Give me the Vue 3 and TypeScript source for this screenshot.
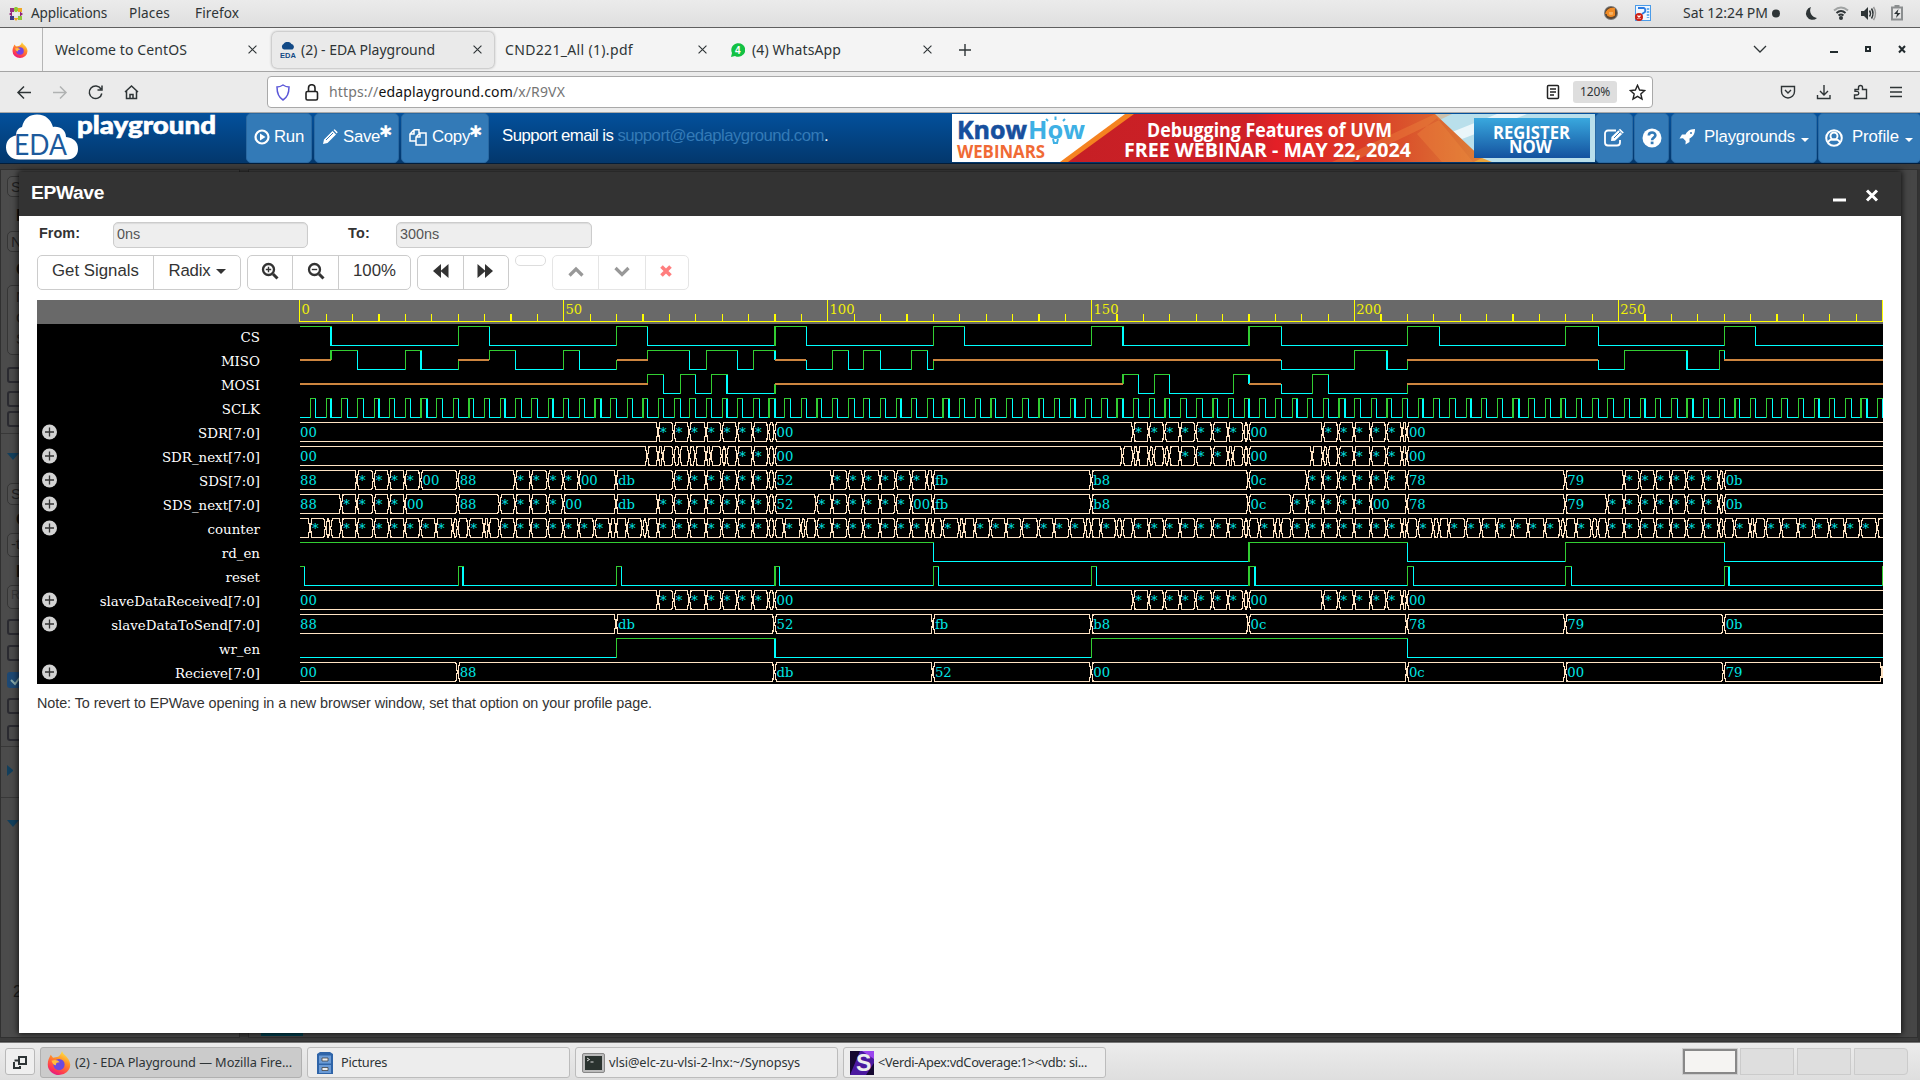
<script setup lang="ts">
type Level = 'h' | 'l' | 'z'
interface Signal {
  name: string
  kind: 'bit' | 'bus'
  wave?: [number, Level][]
  bus?: [number, string][]
}

// Stretches a label to its design width through letter spacing.
const vFit = {
  mounted(el: HTMLElement, binding: { value: number }) {
    el.style.letterSpacing = '0px'
    const natural = el.getBoundingClientRect().width
    const count = (el.textContent ?? '').trim().length
    el.style.letterSpacing = `${(binding.value - natural) / count}px`
  },
}

// Times snap to whole canvas units before the 120% page zoom is applied.
const END = 300
const X0 = 262.8
const UNITS = 1319
const ZOOM = 1.2
const px = (t: number) => +(X0 + ZOOM * Math.round((t * UNITS) / END)).toFixed(2)

const parseBits = (s: string): [number, Level][] =>
  s.split(' ').map((p) => [Number(p.slice(1)), p[0] as Level])
const parseBus = (s: string): [number, string][] =>
  s.split(' ').map((p) => {
    const [t, v] = p.split('=')
    return [Number(t), v ?? '']
  })

const frames = Array.from({ length: 10 }, (_, i) => i * 30)
const cs = frames.map((t) => `h${t} l${t + 6}`).join(' ')
const reset = frames.map((t) => `h${t} l${t + 1}`).join(' ') + ' h300'
const sclk = 'l0 ' + Array.from({ length: 100 }, (_, i) => `h${3 * i + 2} l${3 * i + 3}`).join(' ')
const counter = frames
  .map((t) =>
    [[0, ''], [2, '*'], [5, ''], [6, ''], [8, '*'], [11, '*'], [14, '*'], [17, '*'], [20, '*'], [23, '*'], [26, '*'], [29, '']]
      .map(([d, v]) => `${t + Number(d)}=${v}`)
      .join(' '),
  )
  .join(' ')
const sdr =
  '0=00 68=* 71=* 74=* 77=* 80=* 83=* 86=* 89 90=00 158=* 161=* 164=* 167=* 170=* 173=* 176=* 179 180=00 194=* 197=* 200=* 203=* 206=* 209 210=00'

const bit = (name: string, s: string): Signal => ({ name, kind: 'bit', wave: parseBits(s) })
const bus = (name: string, s: string): Signal => ({ name, kind: 'bus', bus: parseBus(s) })

const signals: Signal[] = [
  bit('CS', cs),
  bit('MISO', 'z0 h6 l11 h20 l23 z30 h36 l41 h50 l53 z60 h66 l74 h77 l83 h86 z90 l96 h101 l104 h107 l110 h116 l119 z120 l186 h200 l206 z210 l246 h251 l263 h269 z270'),
  bit('MOSI', 'z0 h66 l69 h72 l75 h78 l81 z90 h156 l159 h162 l165 h177 z180 l186 h192 l195 z210'),
  bit('SCLK', sclk),
  bus('SDR[7:0]', sdr),
  bus('SDR_next[7:0]', '0=00 66 68 69 71 72 74 75 77 78 80 81 83=* 86=* 89 90=00 156 158 159 161 162 164 165 167=* 170=* 173=* 176 177 179 180=00 192 194 195 197=* 200=* 203=* 206=* 209 210=00'),
  bus('SDS[7:0]', '0=88 11=* 14=* 17=* 20=* 23=00 30=88 41=* 44=* 47=* 50=* 53=00 60=db 71=* 74=* 77=* 80=* 83=* 86=* 89 90=52 101=* 104=* 107=* 110=* 113=* 116=* 119 120=fb 150=b8 180=0c 191=* 194=* 197=* 200=* 203=* 206=* 210=78 240=79 251=* 254=* 257=* 260=* 263=* 266=* 269 270=0b'),
  bus('SDS_next[7:0]', '0=88 8=* 11=* 14=* 17=* 20=00 30=88 38=* 41=* 44=* 47=* 50=00 60=db 68=* 71=* 74=* 77=* 80=* 83=* 86=* 89 90=52 98=* 101=* 104=* 107=* 110=* 113=* 116=00 120=fb 150=b8 180=0c 188=* 191=* 194=* 197=* 200=* 203=00 210=78 240=79 248=* 251=* 254=* 257=* 260=* 263=* 266=* 269 270=0b'),
  bus('counter', counter),
  bit('rd_en', 'h0 l120 h180 l210 h240 l270'),
  bit('reset', reset),
  bus('slaveDataReceived[7:0]', sdr),
  bus('slaveDataToSend[7:0]', '0=88 60=db 90=52 120=fb 150=b8 180=0c 210=78 240=79 270=0b'),
  bit('wr_en', 'l0 h60 l90 h150 l210'),
  bus('Recieve[7:0]', '0=00 30=88 90=db 120=52 150=00 210=0c 240=00 270=79 300'),
]

const rowTop = (i: number) => 24 + i * 24
const order: Record<Level, number> = { l: 0, z: 1, h: 2 }

function bitPaths(s: Signal, i: number) {
  const top = rowTop(i)
  const y: Record<Level, number> = { h: top + 2.5, z: top + 12, l: top + 21.5 }
  let high = ''
  let low = ''
  let mid = ''
  const w = s.wave ?? []
  w.forEach(([t, lv], k) => {
    const end = k + 1 < w.length ? w[k + 1][0] : END
    const x = px(t)
    const seg = `M${k ? x - 0.6 : x} ${y[lv]}H${px(end) + (end < END ? 0.6 : 0)}`
    if (lv === 'h') high += seg
    else if (lv === 'l') low += seg
    else mid += `M${x} ${y.z}H${px(end)}`
    if (k) {
      const prev = w[k - 1][1]
      const edge = `M${x} ${y[prev]}V${y[lv]}`
      if (order[lv] > order[prev]) high += edge
      else low += edge
    }
  })
  return { high, low, mid }
}

function busPath(s: Signal, i: number) {
  const t0 = rowTop(i) + 2.5
  const b0 = t0 + 19
  const m = t0 + 9.5
  const list = s.bus ?? []
  return list
    .map(([t], k) => {
      const last = k + 1 >= list.length
      const end = last ? END : list[k + 1][0]
      const a = px(t)
      const b = px(end)
      if (t >= END) return `M${a - 0.6} ${m - 6}V${m + 6}`
      let d = k
        ? `M${a + 1.3} ${t0}L${a - 0.2} ${m}L${a + 1.3} ${b0}`
        : ''
      const l = k ? a + 0.7 : a
      const r = last ? b : b - 1.9
      d += `M${l} ${t0}H${r}M${l} ${b0}H${r}`
      if (!last) d += `M${b - 2.4} ${t0}L${b - 0.9} ${m}L${b - 2.4} ${b0}`
      return d
    })
    .join('')
}

const rows = signals.map((s, i) => ({
  ...s,
  top: rowTop(i),
  bits: s.kind === 'bit' ? bitPaths(s, i) : null,
  path: s.kind === 'bus' ? busPath(s, i) : '',
  texts: (s.bus ?? []).filter(([, v]) => v).map(([t, v]) => ({ x: px(t) + (t ? 1.5 : 0.2), v })),
}))

const ticks = Array.from({ length: 61 }, (_, i) => i * 5)
const majors = [0, 50, 100, 150, 200, 250]

const side = [
  { k: 'box', gap: 6, h: 21, t: 'S' },
  { k: 'bold', gap: 10, h: 18, t: 'L' },
  { k: 'box', gap: 6, h: 21, t: 'N' },
  { k: 'bold', gap: 9, h: 18, t: 'C' },
  { k: 'list', gap: 6, h: 70, t: 'N C S' },
  { k: 'check', gap: 12, h: 16 },
  { k: 'check', gap: 8, h: 16 },
  { k: 'check', gap: 4, h: 16 },
  { k: 'line', gap: 6, h: 1 },
  { k: 'down', gap: 19, h: 8 },
  { k: 'box', gap: 22, h: 22, t: 'S' },
  { k: 'bold', gap: 6, h: 18, t: 'C' },
  { k: 'box', gap: 4, h: 24, t: '-t' },
  { k: 'bold', gap: 6, h: 18, t: 'F' },
  { k: 'box small', gap: 4, h: 24, t: 'R' },
  { k: 'check', gap: 10, h: 16 },
  { k: 'check', gap: 10, h: 16 },
  { k: 'check on', gap: 11, h: 16 },
  { k: 'check', gap: 10, h: 16 },
  { k: 'check', gap: 11, h: 16 },
  { k: 'line', gap: 5, h: 1 },
  { k: 'right', gap: 18, h: 11 },
  { k: 'line', gap: 21, h: 1 },
  { k: 'down', gap: 22, h: 8 },
  { k: 'num', gap: 155, h: 18, t: '2' },
]
</script>

<template>
  <div class="desk">
    <div class="topbar">
      <svg class="apps" viewBox="0 0 14 14" width="14" height="14">
        <rect x="4.6" y="0" width="4.8" height="4.8" fill="#8fc93a" transform="rotate(45 7 2.4)" />
        <rect x="1" y="1" width="4" height="4" fill="#9b2f84" /><rect x="9" y="1" width="4" height="4" fill="#efa724" />
        <rect x="1" y="9" width="4" height="4" fill="#3a3a8c" /><rect x="9" y="9" width="4" height="4" fill="#8fc93a" />
        <path d="M0 7l3-2.5v5zM14 7l-3-2.5v5z" fill="#932279" /><path d="M7 14l-2.5-3h5z" fill="#efa724" />
        <circle cx="7" cy="7" r="2" fill="#eee" />
      </svg>
      <span class="m1"><span v-fit="76">Applications</span></span>
      <span class="m2"><span v-fit="41">Places</span></span>
      <span class="m3"><span v-fit="44">Firefox</span></span>
      <span class="grow"></span>
      <svg class="tray" width="310" height="27" viewBox="1610 0 310 27">
        <circle cx="1611" cy="13" r="7" fill="#777" /><circle cx="1611" cy="13" r="6" fill="#5c4530" />
        <path d="M1606 14q2-6 9-5M1608 11h6v4q-3 2-6 0z" stroke="#f08a24" stroke-width="2" fill="#f6b060" />
        <rect x="1635.5" y="5.500" width="15" height="15" fill="#eef6ff" stroke="#4a9be8" />
        <path d="M1638 8h6q2 1 1 4l-3 2" stroke="#2c7be0" stroke-width="1.800" fill="none" />
        <path d="M1648 8v10" stroke="#67aef0" stroke-width="2.500" stroke-dasharray="2 1" />
        <circle cx="1639" cy="17" r="4" fill="#cf1f14" /><path d="M1637.500 15.500l3 3m0-3l-3 3" stroke="#fff" stroke-width="1.200" />
        <text x="1683" y="18" textLength="85" class="clock">Sat 12:24 PM</text>
        <circle cx="1776" cy="13.500" r="4" fill="#2e3436" />
        <path d="M1811 7a6.500 6.500 0 1 0 6 11a7.500 7.500 0 0 1-6-11z" fill="#2e3436" />
        <g fill="none" stroke-width="2"><path d="M1834 10.500q7-6 14 0" stroke="#a0a3a3" /><path d="M1836.500 13q4.500-4 9 0" stroke="#2e3436" /><path d="M1838.500 15.500q2.500-2 5 0" stroke="#2e3436" /></g>
        <circle cx="1841" cy="18" r="2" fill="#2e3436" />
        <path d="M1861 11h3l4-4v13l-4-4h-3z" fill="#2e3436" />
        <path d="M1869.500 10.500q2 3 0 6M1871.500 8.500q3 5 0 10" stroke="#2e3436" stroke-width="1.500" fill="none" /><path d="M1873.500 7q4 6.500 0 13" stroke="#999" stroke-width="1.500" fill="none" />
        <path d="M1892 7.500h10v12h-10z" fill="none" stroke="#8b8e8f" stroke-width="2" /><path d="M1894.500 5h5v2h-5z" fill="#8b8e8f" />
        <path d="M1898.500 9l-4.500 5h3l-1 4 4.500-5h-3z" fill="#2e3436" />
      </svg>
    </div>

    <div class="tabs">
      <div class="fx">
        <svg width="16" height="16" viewBox="0 0 32 32"><defs><linearGradient id="ff" x1=".8" y1="0" x2=".3" y2="1"><stop offset="0" stop-color="#fff04a" /><stop offset=".4" stop-color="#ff9128" /><stop offset=".8" stop-color="#ff3a50" /><stop offset="1" stop-color="#e31587" /></linearGradient></defs><path d="M20 0c1 5 10 8 11 18a15 14 0 0 1-30 0C1 12 3 9 5 5l3 4c5-1 9 0 12-9z" fill="url(#ff)" /><circle cx="16" cy="18" r="7.500" fill="#7542e5" /><path d="M6 13q7-3 11 2-6 0-5 4-4 0-6-6z" fill="#ffbd3e" /></svg>
      </div>
      <div class="tab t1"><span class="tt"><span v-fit="132">Welcome to CentOS</span></span><svg class="x" viewBox="0 0 8 8"><path d="M.5.5l7 7m0-7l-7 7" /></svg></div>
      <div class="tab t2 active"><svg width="16" height="16" viewBox="0 0 16 16"><path d="M4 7.500a3 3 0 0 1-.5-5.500 4.500 4 0 0 1 8 0 3 3 0 0 1 1 5.500z" fill="#134a86" /><text x="0" y="15.500" font-size="7.500" font-weight="700" textLength="16" class="sans" fill="#134a86">EDA</text></svg><span class="tt"><span v-fit="134">(2) - EDA Playground</span></span><svg class="x" viewBox="0 0 8 8"><path d="M.5.5l7 7m0-7l-7 7" /></svg></div>
      <div class="tab t3"><span class="tt"><span v-fit="128">CND221_All (1).pdf</span></span><svg class="x" viewBox="0 0 8 8"><path d="M.5.5l7 7m0-7l-7 7" /></svg></div>
      <div class="tab t4"><svg width="14" height="14" viewBox="0 0 14 14"><path d="M0 14l1-4a7 6.800 0 1 1 3 3z" fill="#12c143" /><text x="4" y="11" font-size="10" font-weight="700" fill="#fff" class="sans">4</text></svg><span class="tt"><span v-fit="89">(4) WhatsApp</span></span><svg class="x" viewBox="0 0 8 8"><path d="M.5.5l7 7m0-7l-7 7" /></svg></div>
      <svg class="plus" width="12" height="12" viewBox="0 0 12 12"><path d="M6 0v12M0 6h12" stroke="#2e3436" stroke-width="1.400" /></svg>
      <span class="grow"></span>
      <svg width="170" height="43" viewBox="1750 29 170 43"><path d="M1754 47l6 6 6-6" fill="none" stroke="#2e3436" stroke-width="1.300" /><path d="M1830 52h8v2h-8z" fill="#222b2e" /><rect x="1866" y="48" width="4" height="4" fill="none" stroke="#222b2e" stroke-width="2" /><path d="M1899 47l6 6.500m0-6.500l-6 6.500" stroke="#222b2e" stroke-width="2" /></svg>
    </div>

    <div class="nav">
      <svg class="navicons" width="267" height="40" viewBox="0 72 267 40" fill="none" stroke="#2e3436" stroke-width="1.500">
        <path d="M31 92.500H18M24 86.500l-6 6 6 6" /><path d="M53 92.500h13M60 86.500l6 6-6 6" stroke="#b0b2b2" />
        <path d="M101 89a6.300 6.300 0 1 0 .8 4.500M102 85.500v4.500h-4.500" /><path d="M125 92l6.500-6 6.500 6M126.500 91v7.500h10V91M130 98.500v-4h3v4" />
      </svg>
      <div class="url">
        <svg width="14" height="17" viewBox="0 0 14 17" class="shield"><path d="M7 1q3 2 6 2c0 6-1 10-6 13C2 13 1 9 1 3q3 0 6-2z" fill="none" stroke="#5a56d8" stroke-width="1.500" /></svg>
        <svg width="14" height="17" viewBox="0 0 14 17" class="lock"><rect x="1" y="7.500" width="11.500" height="8.500" rx="1.500" fill="none" stroke="#222" stroke-width="1.600" /><path d="M3.500 7.500V4a3.200 3.200 0 0 1 6.500 0v3.500" fill="none" stroke="#222" stroke-width="1.600" /></svg>
        <span class="addr"><span v-fit="236">https://<b>edaplayground.com</b>/x/R9VX</span></span>
        <span class="grow"></span>
        <svg width="14" height="16" viewBox="0 0 14 16" class="reader"><rect x="1.500" y="1.500" width="11" height="13" rx="1" fill="none" stroke="#222" stroke-width="1.500" /><path d="M4 5h6M4 8h6M4 11h4" stroke="#222" stroke-width="1.300" /></svg>
        <span class="zoom"><span v-fit="30">120%</span></span>
        <svg width="17" height="17" viewBox="0 0 17 17" class="star"><path d="M8.500 1.300l2.100 4.700 5.100.5-3.900 3.400 1.200 5.100-4.500-2.700L4 15l1.200-5.100L1.300 6.500l5.100-.5z" fill="none" stroke="#222" stroke-width="1.400" /></svg>
      </div>
      <svg width="267" height="40" viewBox="1653 72 267 40" fill="none" stroke="#2e3436" stroke-width="1.400">
        <path d="M1781.500 86.500h13v5a6.500 6.500 0 0 1-13 0zM1785 90l3 3 3-3" /><path d="M1824 85v9M1820 91l4 4 4-4M1817.500 95v3.500h12.500V95" />
        <path d="M1855 89.500h3.500v-2a2 2 0 0 1 4 0v2h4v9h-12v-3.500h2.500a1.800 1.800 0 0 0 0-3.600h-2z" /><path d="M1890 87.500h12M1890 92h12M1890 96.500h12" />
      </svg>
    </div>

    <div class="eda">
      <svg class="logo" width="246" height="50" viewBox="0 113 246 50">
        <path d="M19 159.500C10 159.500 6 153 6 147.500C6 141 10 136.500 16 135.500C16 131 18 128 22 127C24 118 30 114.500 37 114.500C46 114.500 51 120 53 127C60 126 66 130 66 137C74 138 78 142 78 149C78 155 74 159.500 67 159.500Z" fill="#fff" />
        <text x="14" y="155" textLength="53" lengthAdjust="spacingAndGlyphs" class="lato" font-size="28" fill="#1c5a9c">EDA</text>
        <text x="77" y="133.500" textLength="139" lengthAdjust="spacingAndGlyphs" class="lato black" font-size="25" fill="#fff" stroke="#fff" stroke-width=".6">playground</text>
      </svg>
      <div class="btn run"><svg width="16" height="16" viewBox="0 0 16 16"><circle cx="8" cy="8" r="6.500" fill="none" stroke="#fff" stroke-width="2.200" /><path d="M6 4.500l5.500 3.500L6 11.500z" fill="#fff" /></svg><span v-fit="30">Run</span></div>
      <div class="btn save"><svg width="16" height="16" viewBox="0 0 16 16"><path d="M1 15l1-4.500L10.500 2l3.500 3.500L5.500 14zM11.500 1l1.200-.8 3 3-1 1.300z" fill="#fff" /><path d="M4 11l7-7" stroke="#337ab7" /></svg><span v-fit="37">Save</span><b>✱</b></div>
      <div class="btn copy"><svg width="18" height="17" viewBox="0 0 18 17" fill="none" stroke="#fff" stroke-width="1.500"><path d="M5 .8h5v3.500M5 .8L1 5v7h6V8l4-4h6v12H7v-4M5 .8V5H1M11 4v4H7" /></svg><span v-fit="38">Copy</span><b>✱</b></div>
      <div class="support"><span v-fit="326">Support email is <i>support@edaplayground.com</i>.</span></div>
      <svg class="banner" width="643" height="48" viewBox="0 0 643 48">
        <defs>
          <linearGradient id="bn"><stop offset="0" stop-color="#c61f25" /><stop offset=".45" stop-color="#cf2127" /><stop offset=".5" stop-color="#e31f27" /><stop offset=".72" stop-color="#d93d26" /><stop offset="1" stop-color="#dd8138" /></linearGradient>
          <linearGradient id="rg" x1="0" x2="0" y1="0" y2="1"><stop offset="0" stop-color="#39a8de" /><stop offset="1" stop-color="#14529f" /></linearGradient>
        </defs>
        <rect width="643" height="48" fill="#fff" />
        <path d="M480 0h163v48H530z" fill="#b9dfeb" /><path d="M500 18L545 0h30l-65 25z" fill="#eaf6fa" />
        <path d="M114 48L180 0H483L534 48z" fill="url(#bn)" />
        <path d="M400 48L500 0 483 0 380 48zM490 48l-25-28 20-16 36 44z" fill="#f08b3e" opacity=".35" />
        <path d="M108 48L173 0H182L116 48z" fill="#f58220" /><path d="M522 48l8-4 10 4z" fill="#e9a33c" />
        <g class="nb">
          <text x="5" y="24.500" textLength="70" lengthAdjust="spacingAndGlyphs" font-size="25" fill="#174f9d" stroke="#174f9d" stroke-width=".6">Know</text>
          <text x="76" y="24.500" textLength="57" lengthAdjust="spacingAndGlyphs" font-size="25" fill="#3eb0e4">How</text>
          <path d="M101 25l1 4h3l1-4M103.500 6V2.500M96 7l-2-2M111 7l2-2" stroke="#3eb0e4" stroke-width="2" fill="none" />
          <text x="5" y="43.500" textLength="88" lengthAdjust="spacingAndGlyphs" font-size="17" fill="#f06a35">WEBINARS</text>
          <g fill="#fff">
            <text x="195" y="22.500" textLength="245" lengthAdjust="spacingAndGlyphs" font-size="19">Debugging Features of UVM</text>
            <text x="172" y="43" textLength="287" lengthAdjust="spacingAndGlyphs" font-size="19">FREE WEBINAR - MAY 22, 2024</text>
            <rect x="522" y="4" width="116" height="40" fill="url(#rg)" />
            <text x="541" y="24.500" textLength="77" lengthAdjust="spacingAndGlyphs" font-size="17.500">REGISTER</text>
            <text x="557" y="38.500" textLength="43" lengthAdjust="spacingAndGlyphs" font-size="17.500">NOW</text>
          </g>
        </g>
      </svg>
      <div class="btn edit"><svg width="22" height="19" viewBox="0 0 22 19"><path d="M13 2.500H5a3 3 0 0 0-3 3v9a3 3 0 0 0 3 3h9a3 3 0 0 0 3-3V12" fill="none" stroke="#fff" stroke-width="1.800" /><path d="M8 13l.5-4L17 .8 20.800 4.500 12 12.700zM17 .8" fill="#fff" /><path d="M11 10l6-6M15.500 2l4 4" stroke="#337ab7" stroke-width="1" /></svg></div>
      <div class="btn help"><svg width="20" height="20" viewBox="0 0 20 20"><circle cx="10" cy="10" r="9.500" fill="#fff" /><path d="M6.800 7.500c0-4 6.600-4 6.600-.2 0 2.400-3.300 2.300-3.300 5" fill="none" stroke="#337ab7" stroke-width="2.600" /><rect x="8.700" y="13.600" width="2.800" height="2.600" fill="#337ab7" /></svg></div>
      <div class="btn plays"><svg width="16" height="16" viewBox="0 0 16 16"><path d="M16 0c-6 0-8 3-9.500 5.500H3L.5 9.500l3.500-.2L6.700 12 6.500 15.500l4-2.500V9.500C13 8 16 6 16 0z" fill="#fff" /><circle cx="12" cy="4" r="1" fill="#337ab7" /></svg><span v-fit="91">Playgrounds</span><em></em></div>
      <div class="btn prof"><svg width="18" height="18" viewBox="0 0 18 18"><circle cx="9" cy="9" r="7.800" fill="none" stroke="#fff" stroke-width="2" /><circle cx="9" cy="7" r="3.500" fill="none" stroke="#fff" stroke-width="1.900" /><path d="M3 13.500c1.500-3 3-3 6-3s4.500 0 6 3" fill="none" stroke="#fff" stroke-width="1.900" /></svg><span v-fit="47">Profile</span><em></em></div>
    </div>

    <div class="stage">
      <div class="under">
        <div class="side">
          <template v-for="(s, i) in side" :key="i">
            <div :class="['s', s.k]" :style="{ marginTop: s.gap + 'px', height: s.h + 'px' }">{{ s.t }}<svg v-if="s.k === 'check on'" width="14" height="14" viewBox="0 0 14 14"><path d="M2 7l4 4 6-8" stroke="#8aa" stroke-width="2" fill="none" /></svg></div>
          </template>
        </div>
        <div class="rest"><div class="teal"></div></div>
        <div class="edge"></div>
      </div>

      <div class="modal">
        <div class="mhead">
          <span v-fit="73">EPWave</span>
          <span class="grow"></span>
          <svg width="60" height="20" viewBox="1830 182 60 20"><path d="M1833 197.500h13v3h-13z" fill="#fff" /><path d="M1867 189.500l10 10m0-10l-10 10" stroke="#fff" stroke-width="3" /></svg>
        </div>
        <div class="range">
          <label class="l1"><span v-fit="41">From:</span></label><div class="inp i1">0ns</div>
          <label class="l2"><span v-fit="22">To:</span></label><div class="inp i2">300ns</div>
        </div>
        <div class="tools">
          <div class="grp">
            <div class="signals"><span v-fit="87">Get Signals</span></div>
            <div class="radix"><span v-fit="42">Radix</span><em></em></div>
          </div>
          <div class="grp">
            <div class="w44"><svg width="18" height="18" viewBox="0 0 18 18" fill="none" stroke="#333"><circle cx="7.500" cy="7.500" r="5.500" stroke-width="2.300" /><path d="M12 12l4.500 4.500" stroke-width="3" /><path d="M4.800 7.500h5.400M7.500 4.800v5.400" stroke-width="1.400" /></svg></div>
            <div class="w46"><svg width="18" height="18" viewBox="0 0 18 18" fill="none" stroke="#333"><circle cx="7.500" cy="7.500" r="5.500" stroke-width="2.300" /><path d="M12 12l4.500 4.500" stroke-width="3" /><path d="M4.800 7.500h5.400" stroke-width="1.400" /></svg></div>
            <div class="w72"><span v-fit="43">100%</span></div>
          </div>
          <div class="grp">
            <div class="w45"><svg width="16" height="14" viewBox="0 0 16 14" fill="#333"><path d="M8 0v14L0 7zM15.500 0v14L7.500 7z" /></svg></div>
            <div class="w45 nudge"><svg width="16" height="14" viewBox="0 0 16 14" fill="#333"><path d="M8 0v14l8-7zM.5 0v14l8-7z" /></svg></div>
          </div>
          <div class="stub"></div>
          <div class="grp dim">
            <div class="w45"><svg width="16" height="11" viewBox="0 0 16 11"><path d="M1.500 9.500L8 3l6.500 6.500" stroke="#333" stroke-width="3.200" fill="none" /></svg></div>
            <div class="w47"><svg width="16" height="11" viewBox="0 0 16 11"><path d="M1.500 2L8 8.500 14.500 2" stroke="#333" stroke-width="3.200" fill="none" /></svg></div>
            <div class="w43 nudge"><svg width="12" height="12" viewBox="0 0 12 12"><path d="M1.500 1.500l9 9m0-9l-9 9" stroke="#f00" stroke-width="3.600" /></svg></div>
          </div>
        </div>

        <svg class="waves" width="1846" height="384" viewBox="0 0 1846 384">
          <rect width="1846" height="384" fill="#000" /><rect width="1846" height="24" fill="#696969" />
          <g stroke="#ff0" stroke-width="1.200" shape-rendering="crispEdges">
            <path d="M262.200 21.500H1846" />
            <path v-for="t in ticks" :key="t" :d="`M${px(t)} ${t % 50 ? 14 : 0}V22`" />
          </g>
          <g class="serif value" fill="#ff0"><text v-for="t in majors" :key="t" :x="px(t) + 1.6" y="14">{{ t }}</text></g>
          <g v-for="r in rows" :key="r.name">
            <text class="serif name" x="223" :y="r.top + 18" text-anchor="end" fill="#fff">{{ r.name }}</text>
            <template v-if="r.kind === 'bus'">
              <circle cx="12.500" :cy="r.top + 12" r="7.500" fill="#d3d3d3" />
              <path :d="`M8 ${r.top + 12}h9M12.500 ${r.top + 7.500}v9`" stroke="#333" stroke-width="1.300" />
              <path :d="r.path" stroke="#ffe4c4" stroke-width="1.200" fill="none" shape-rendering="crispEdges" />
              <text v-for="(t, j) in r.texts" :key="j" class="serif value" :x="t.x" :y="r.top + 17" fill="#0ff">{{ t.v }}</text>
            </template>
            <g v-else-if="r.bits" fill="none" stroke-width="1.200" shape-rendering="crispEdges">
              <path :d="r.bits.low" stroke="#0ff" /><path :d="r.bits.high" stroke="#32cd32" /><path :d="r.bits.mid" stroke="#cd853f" stroke-width="2" />
            </g>
          </g>
        </svg>
        <div class="note"><span v-fit="615">Note: To revert to EPWave opening in a new browser window, set that option on your profile page.</span></div>
      </div>
    </div>

    <div class="taskbar">
      <div class="show"><svg width="16" height="16" viewBox="0 0 16 16" fill="none" stroke="#2e3436" stroke-width="2"><path d="M7 3h7v7H7zM6 6.500H2.500M2 8v6h6v-2" /></svg></div>
      <div class="task cur"><svg width="24" height="24" viewBox="0 0 32 32"><path d="M20 0c1 5 10 8 11 18a15 14 0 0 1-30 0C1 12 3 9 5 5l3 4c5-1 9 0 12-9z" fill="url(#ff)" /><circle cx="16" cy="18" r="7.500" fill="#6b4ae0" /><path d="M6 13q7-3 11 2-6 0-5 4-4 0-6-6z" fill="#ffbd3e" /></svg><span v-fit="217">(2) - EDA Playground — Mozilla Fire...</span></div>
      <div class="task"><svg width="22" height="22" viewBox="0 0 22 22"><path d="M3 2l3-2h10l3 2v20H3z" fill="#2f64a8" /><path d="M5 3.500h12v8H5zM5 13h12v8H5z" fill="#6b9bd6" /><path d="M8 6h6v3H8zM8 15.500h6v3H8z" fill="#eee" stroke="#444" stroke-width=".8" /></svg><span class="pic" v-fit="46">Pictures</span></div>
      <div class="task"><svg width="23" height="22" viewBox="0 0 23 22"><rect x=".5" y="1.500" width="22" height="19" rx="1.500" fill="#bbb" stroke="#888" /><rect x="3" y="4" width="17" height="14" fill="#2a332f" /><path d="M5 6l2.500 1.500L5 9M8.500 10h3" stroke="#ddd" fill="none" /></svg><span v-fit="191">vlsi@elc-zu-vlsi-2-lnx:~/Synopsys</span></div>
      <div class="task"><svg width="24" height="24" viewBox="0 0 24 24"><rect width="24" height="24" fill="#4b19a0" /><path d="M0 0h10L0 24zM16 24l8-12v12z" fill="#150830" /><path d="M12 0h12v8z" fill="#9a45ee" /><text x="6" y="20" font-size="23" class="sans" font-weight="700" fill="#eee" textLength="13">S</text></svg><span v-fit="209">&lt;Verdi-Apex:vdCoverage:1&gt;&lt;vdb: si...</span></div>
      <span class="grow"></span>
      <div class="ws on"></div><div class="ws"></div><div class="ws"></div><div class="ws last"></div>
    </div>
  </div>
</template>

<style>
body { margin: 0; overflow: hidden; }
</style>

<style scoped>
.desk { width: 1920px; height: 1080px; display: flex; flex-direction: column; overflow: hidden; font-family: "Noto Sans", "Open Sans", sans-serif; font-size: 13.6px; color: #2e3436; white-space: nowrap; }
.desk * { box-sizing: border-box; }
.desk svg { display: block; flex: none; }
.grow { flex: 1; }
.sans { font-family: "Liberation Sans", Arial, sans-serif; }
.lato { font-family: Lato, sans-serif; }
.black { font-weight: 900; }
.nb { font-family: "Open Sans", "Noto Sans", sans-serif; font-weight: 700; }
.clock { font-size: 14px; fill: #2e3436; }

.topbar { height: 28px; flex: none; display: flex; align-items: center; background: linear-gradient(#ebebeb, #dfdfdf); border-bottom: 1px solid #5f5f5f; }
.topbar > span { padding-bottom: 2px; }
.apps { margin-left: 9px; }
.m1 { width: 98px; margin-left: 8px; }
.m2 { width: 66px; }
.m3 { width: 60px; }
.tray { overflow: visible; }

.tabs { height: 44px; flex: none; display: flex; align-items: center; background: #f4f4f4; border-bottom: 1px solid #a5a5a5; }
.fx { width: 43px; height: 43px; padding: 14px 0 0 12px; border-right: 1px solid #b5b5b5; }
.tab { width: 225px; height: 36px; display: flex; align-items: center; font-size: 14px; }
.tab .tt { flex: 1; }
.tab .x { width: 9px; height: 9px; fill: none; stroke: #2e3436; stroke-width: 1; overflow: visible; }
.tab.t1 { width: 229px; padding: 0 15px 0 12px; }
.tab.t2 { width: 222px; margin-right: 1px; padding: 0 12px 0 8px; }
.tab.t2 .tt { margin-left: 5px; }
.tab.t3 { padding: 0 13px 0 10px; }
.tab.t4 { padding: 0 13px 0 11px; }
.tab.t4 .tt { margin-left: 7px; }
.active { background: #eaeaea; border-radius: 5px; box-shadow: 0 0 3px #8a8a8a; }
.plus { margin-left: 14px; }

.nav { height: 41px; flex: none; display: flex; align-items: center; background: #ebebeb; border-bottom: 1px solid #a9a9a9; }
.url { width: 1386px; height: 32px; display: flex; align-items: center; background: #fff; border: 1px solid #a9a9a9; border-radius: 4px; padding-right: 6px; }
.shield { margin-left: 8px; }
.lock { margin-left: 15px; }
.addr { margin-left: 10px; padding-bottom: 1px; color: #757575; font-size: 14px; }
.addr b { font-weight: 400; color: #111; }
.zoom { width: 44px; height: 22px; margin: 0 12px 0 13px; background: #dedede; border-radius: 3px; padding-left: 7px; line-height: 22px; font-size: 12px; }

.eda { height: 51px; flex: none; display: flex; background: linear-gradient(#03509c, #03376c); border-bottom: 1px solid #021d3a; font-family: "Liberation Sans", Arial, sans-serif; font-size: 16.8px; color: #fff; }
.btn { height: 50px; flex: none; display: flex; background: #337ab7; border: 1px solid #2a69a2; border-radius: 5px; padding-top: 13px; line-height: 19px; }
.btn svg { margin-top: 2px; }
.btn b { font-family: "DejaVu Sans", sans-serif; font-size: 16px; line-height: 12px; height: 12px; margin: -1px 0 0 -1px; }
.btn em { width: 0; height: 0; border: 4px solid transparent; border-top-color: #fff; border-bottom: 0; margin: 11px 0 0 6px; }
.run { width: 66px; padding-left: 7px; gap: 4px; }
.save { width: 85px; margin-left: 2px; padding-left: 7px; }
.save span, .copy span { margin-left: 5px; }
.copy { width: 88px; margin-left: 2px; padding-left: 7px; }
.support { width: 463px; flex: none; padding: 13px 0 0 13px; line-height: 19px; }
.support i { font-style: normal; color: #337ab7; }
.banner { margin-top: 1px; }
.edit { width: 38px; padding-left: 7px; }
.btn.edit svg { margin-top: 1px; }
.btn.help svg { margin-top: 1px; }
.help { width: 35px; margin-left: 1px; padding-left: 7px; }
.plays { width: 146px; margin-left: 2px; padding-left: 7px; }
.plays span { margin-left: 9px; }
.prof { width: 103px; margin-left: 1px; padding-left: 6px; }
.prof span { margin-left: 9px; }

.stage { position: relative; height: 878px; flex: none; overflow: hidden; font-family: "Liberation Sans", Arial, sans-serif; }
.under { height: 100%; display: flex; background: #3c3c3c; padding-top: 5px; border-bottom: 1px solid #333; }
.side { width: 240px; height: 869px; border: 1px solid #303030; background: #4b4b4b; display: flex; flex-direction: column; align-items: flex-start; padding-top: 0; overflow: hidden; color: #1c1c1c; }
.s { flex: none; }
.s.box, .s.list { width: 180px; margin-left: 6px; border: 1px solid #353535; border-radius: 5px; background: #4f4f4f; padding-left: 3px; font-size: 15px; line-height: 19px; color: #222; }
.s.small { font-size: 12px; color: #383838; }
.s.list { width: 60px; white-space: normal; padding: 0 44px 0 8px; line-height: 21px; }
.s.bold { margin-left: 15px; font-weight: 700; font-size: 17px; line-height: 18px; color: #111; }
.s.num { margin-left: 12px; font-size: 16px; }
.s.check { width: 16px; margin-left: 6px; border: 2px solid #2a2a30; border-radius: 3px; }
.s.on { background: #1d4873; border-color: #1d4873; }
.s.on svg { margin-top: -1px; }
.s.line { width: 100%; background: #383838; }
.s.down { margin-left: 6px; border: 6px solid transparent; border-top: 7px solid #123f5c; border-bottom: 0; width: 12px; }
.s.right { margin-left: 6px; border: 5.500px solid transparent; border-left: 6px solid #123f5c; border-right: 0; width: 6px; }
.rest { flex: 1; height: 869px; margin-left: 8px; background: #464646; border: 1px solid #303030; display: flex; align-items: flex-end; }
.teal { width: 42px; height: 30px; margin: 0 0 1px 12px; background: #00404f; }
.edge { width: 2px; background: #333; }

.modal { position: absolute; left: 19px; top: 8px; width: 1882px; height: 861px; background: #fff; box-shadow: 0 0 6px 1px rgba(0, 0, 0, .75); color: #333; }
.mhead { height: 44px; background: #333; color: #fff; font-weight: 700; font-size: 19.200px; display: flex; align-items: center; padding: 0 11px 2px 12px; }
.range { height: 39px; display: flex; align-items: flex-start; padding-top: 6px; font-size: 14.4px; }
.range label { font-weight: 700; padding-top: 3px; }
.l1 { width: 74px; margin-left: 20px; }
.l2 { width: 48px; margin-left: 40px; }
.inp { height: 26px; border: 1px solid #ccc; border-radius: 5px; background: #eee; color: #555; padding: 3px; line-height: 17px; box-shadow: inset 0 1px 1px rgba(0, 0, 0, .08); }
.i1 { width: 195px; }
.i2 { width: 196px; }
.tools { height: 45px; display: flex; align-items: flex-start; padding-left: 18px; gap: 6px; font-size: 16.800px; }
.grp { display: flex; height: 35px; border: 1px solid #ccc; border-radius: 5px; }
.grp > div { display: flex; align-items: center; justify-content: center; padding-bottom: 3px; }
.grp > div + div { border-left: 1px solid #ccc; }
.grp > .nudge { padding-right: 2px; }
.grp em { border: 5px solid transparent; border-top-color: #333; border-bottom: 0; margin-left: 5px; }
.signals { width: 115px; }
.radix { width: 87px; }
.w43 { width: 43px; }
.w44 { width: 44px; }
.w45 { width: 45px; }
.w46 { width: 46px; }
.w47 { width: 47px; }
.w72 { width: 72px; }
.stub { width: 31px; height: 11px; border: 1px solid #ddd; border-radius: 5px; }
.dim { opacity: .5; }
.waves { margin-left: 18px; }
.serif { font-family: "DejaVu Serif", serif; font-size: 13.200px; }
.name { font-size: 13.380px; }
.value { opacity: .9; }
.note { margin: 11px 0 0 18px; font-size: 14.400px; line-height: 17px; }

.taskbar { height: 38px; flex: none; display: flex; align-items: flex-start; padding: 4px 12px 0 5px; background: linear-gradient(#ececec, #dedede); border-top: 1px solid #777; font-size: 12.800px; }
.show { width: 30px; height: 27px; margin-top: 1px; border: 1px solid #b9b9b9; border-radius: 3px; background: #efefef; display: flex; align-items: center; justify-content: center; }
.task { width: 263px; height: 31px; margin-left: 5px; border: 1px solid #bcbcbc; border-radius: 3px; background: #ededed; display: flex; align-items: center; padding-left: 6px; gap: 4px; }
.task span { padding-bottom: 2px; }
.task .pic { margin-left: 1px; }
.task.cur { width: 262px; background: #cbcbcb; border-color: #b0b0b0; }
.ws { width: 54px; height: 27px; margin: 1px 0 0 3px; border: 1px solid #cbcbcb; background: #dedede; }
.ws.on { border: 2px solid #888; outline: 1px solid #ccc; background: #f5f4f2; margin-top: 2px; height: 25px; }
.ws.last { border-radius: 0 4px 4px 0; }
</style>
